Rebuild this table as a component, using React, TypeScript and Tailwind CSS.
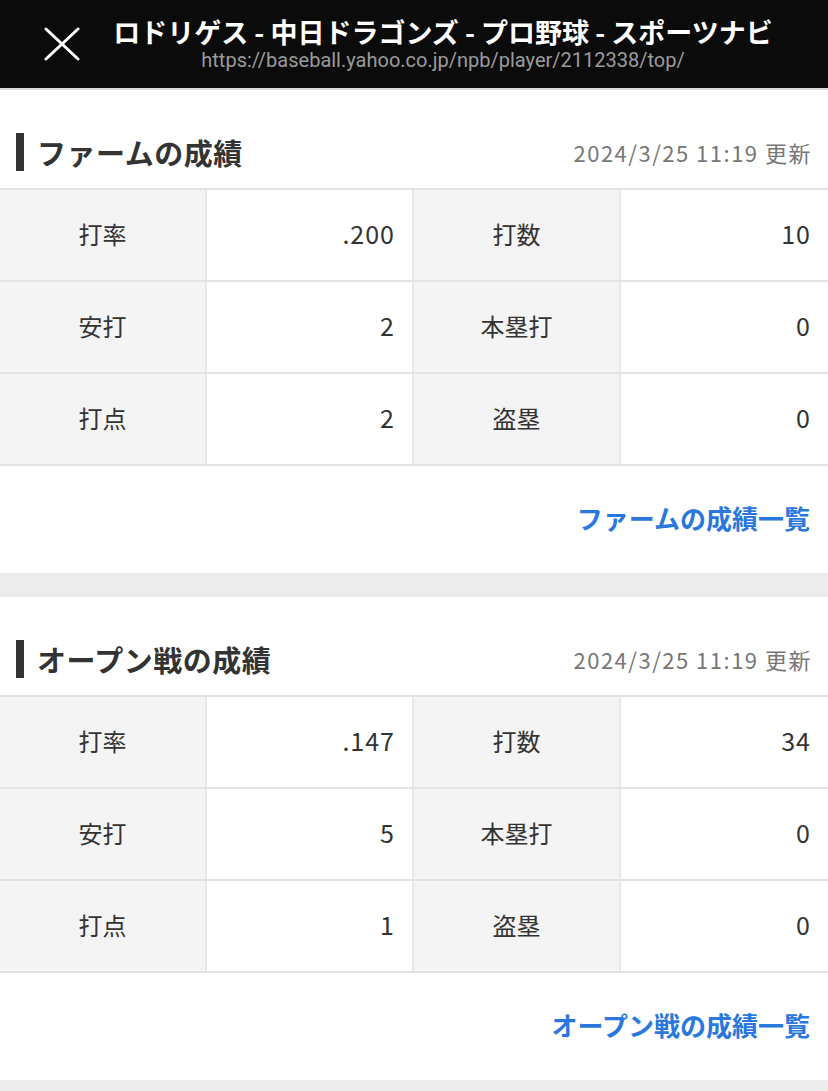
import React from 'react';

type Stat = { label: string; value: string };

interface SectionProps {
  title: string;
  updated: string;
  stats: Stat[];
  link: string;
}

const jp = "font-['Noto_Sans_CJK_JP',sans-serif]";

const StatSection = ({ title, updated, stats, link }: SectionProps) => {
  const rows: Stat[][] = [];
  for (let i = 0; i < stats.length; i += 2) rows.push(stats.slice(i, i + 2));

  return (
    <section className="bg-white">
      <div className="pt-[40px] pb-[14px] pl-4 pr-4">
        <div className="flex h-[44px] items-center justify-between">
          <div className="flex items-center">
            <span className="h-[38px] w-[8px] bg-[#333333]" />
            <h2 className="ml-[13px] text-[29px] font-bold leading-none tracking-[0.5px] text-[#333333]">{title}</h2>
          </div>
          <span className="text-[22px] leading-none tracking-[1.5px] text-[#777777]">{updated}</span>
        </div>
      </div>

      <div className="border-t-2 border-[#e3e3e3]">
        {rows.map((row, i) => (
          <div key={i} className="grid h-[92px] grid-cols-4 border-b-2 border-[#e3e3e3]">
            {row.map((s) => (
              <React.Fragment key={s.label}>
                <div className="flex items-center justify-center border-r-2 border-[#e8e8e8] bg-[#f4f4f4] pb-[3px] text-[24px] text-[#333333]">
                  {s.label}
                </div>
                <div className="flex items-center justify-end border-r-2 border-[#e8e8e8] pb-[3px] pr-[17px] text-[25px] tracking-[1px] text-[#333333] last:border-r-0">
                  {s.value}
                </div>
              </React.Fragment>
            ))}
          </div>
        ))}
      </div>

      <div className="flex h-[107px] items-center justify-end pb-[4px] pr-[18px]">
        <a className="text-[26px] font-bold leading-none text-[#2a78de]">{link}</a>
      </div>
    </section>
  );
};

const App = () => {
  return (
    <div className={`min-h-[1091px] w-[828px] bg-[#ececec] ${jp}`}>
      <header className="flex h-[88px] items-center bg-[#0b0b0b]">
        <button className="ml-[44px] flex h-[36px] w-[36px] items-center justify-center">
          <svg width="36" height="34" viewBox="0 0 36 34" fill="none" stroke="white" strokeWidth="3" strokeLinecap="round">
            <path d="M2 2 L34 32" />
            <path d="M34 2 L2 32" />
          </svg>
        </button>
        <div className="ml-[14px] flex flex-1 flex-col items-center justify-center pr-[36px]">
          <h1 className="text-[27px] font-bold leading-[28px] text-white">
            ロドリゲス - 中日ドラゴンズ - プロ野球 - スポーツナビ
          </h1>
          <p className="mt-[3px] font-['Roboto',sans-serif] text-[20px] leading-[22px] text-[#9b9b9b]">
            https://baseball.yahoo.co.jp/npb/player/2112338/top/
          </p>
        </div>
      </header>
      <div className="h-[2px] bg-[#d9d9d9]" />

      <StatSection
        title="ファームの成績"
        updated="2024/3/25 11:19 更新"
        link="ファームの成績一覧"
        stats={[
          { label: '打率', value: '.200' },
          { label: '打数', value: '10' },
          { label: '安打', value: '2' },
          { label: '本塁打', value: '0' },
          { label: '打点', value: '2' },
          { label: '盗塁', value: '0' },
        ]}
      />

      <div className="h-[24px]" />

      <StatSection
        title="オープン戦の成績"
        updated="2024/3/25 11:19 更新"
        link="オープン戦の成績一覧"
        stats={[
          { label: '打率', value: '.147' },
          { label: '打数', value: '34' },
          { label: '安打', value: '5' },
          { label: '本塁打', value: '0' },
          { label: '打点', value: '1' },
          { label: '盗塁', value: '0' },
        ]}
      />
    </div>
  );
};

export default App;
